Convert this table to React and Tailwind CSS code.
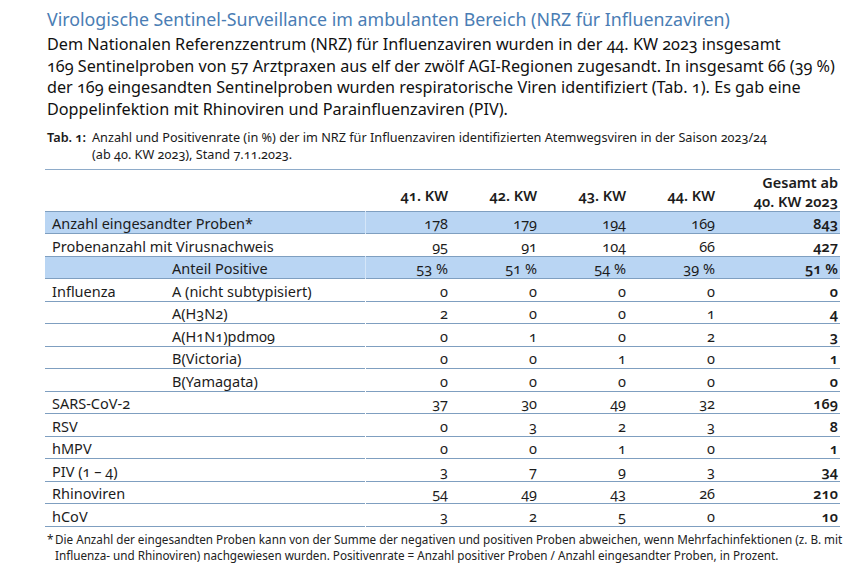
const weeks = ["41. KW", "42. KW", "43. KW", "44. KW"];

const rows = [
  { a: "Anzahl eingesandter Proben*", span: true, v: ["178", "179", "194", "169"], t: "843", blue: true },
  { a: "Probenanzahl mit Virusnachweis", span: true, v: ["95", "91", "104", "66"], t: "427" },
  { a: "", b: "Anteil Positive", v: ["53 %", "51 %", "54 %", "39 %"], t: "51 %", blue: true },
  { a: "Influenza", b: "A (nicht subtypisiert)", v: ["0", "0", "0", "0"], t: "0" },
  { a: "", b: "A(H3N2)", v: ["2", "0", "0", "1"], t: "4" },
  { a: "", b: "A(H1N1)pdm09", v: ["0", "1", "0", "2"], t: "3" },
  { a: "", b: "B(Victoria)", v: ["0", "0", "1", "0"], t: "1" },
  { a: "", b: "B(Yamagata)", v: ["0", "0", "0", "0"], t: "0" },
  { a: "SARS-CoV-2", v: ["37", "30", "49", "32"], t: "169" },
  { a: "RSV", v: ["0", "3", "2", "3"], t: "8" },
  { a: "hMPV", v: ["0", "0", "1", "0"], t: "1" },
  { a: "PIV (1 – 4)", v: ["3", "7", "9", "3"], t: "34" },
  { a: "Rhinoviren", v: ["54", "49", "43", "26"], t: "210" },
  { a: "hCoV", v: ["3", "2", "5", "0"], t: "10" },
];

export default function App() {
  return (
    <div
      className="w-[864px] h-[576px] overflow-hidden bg-white text-[#1c1c1c] pl-[47px] pt-[7px] oldstyle-nums"
      style={{ fontFamily: '"Noto Sans", "Open Sans", sans-serif' }}
    >
      <h1 className="text-[17.8px] leading-[24px] text-[#4a7db4]">
        Virologische Sentinel-Surveillance im ambulanten Bereich (NRZ für Influenzaviren)
      </h1>
      <p className="mt-[3px] text-[16.2px] leading-[21.7px] text-[#111]">
        Dem Nationalen Referenzzentrum (NRZ) für Influenzaviren wurden in der 44. KW 2023 insgesamt
        <br />
        169 Sentinelproben von 57 Arztpraxen aus elf der zwölf AGI-Regionen zugesandt. In insgesamt 66 (39 %)
        <br />
        der 169 eingesandten Sentinelproben wurden respiratorische Viren identifiziert (Tab. 1). Es gab eine
        <br />
        Doppelinfektion mit Rhinoviren und Parainfluenzaviren (PIV).
      </p>
      <div className="mt-[8px] flex text-[12.7px] leading-[17px] text-[#1a1a1a]">
        <span className="font-semibold w-[45px] shrink-0">Tab. 1:</span>
        <span>
          Anzahl und Positivenrate (in %) der im NRZ für Influenzaviren identifizierten Atemwegsviren in der Saison 2023/24
          <br />
          (ab 40. KW 2023), Stand 7.11.2023.
        </span>
      </div>

      <table className="-ml-[2px] mt-[6px] w-[795px] table-fixed border-collapse border-t border-[#8eabc9] text-[14.5px]">
        <colgroup>
          <col className="w-[127px]" />
          <col className="w-[193px]" />
          <col className="w-[89px]" />
          <col className="w-[89px]" />
          <col className="w-[89px]" />
          <col className="w-[89px]" />
          <col className="w-[119px]" />
        </colgroup>
        <thead>
          <tr className="h-[42px] border-b-[1.5px] border-[#7f9fc0]">
            <th />
            <th />
            {weeks.map((w) => (
              <th key={w} className="pr-[6px] pt-[10px] text-right font-semibold leading-[18px]">
                {w}
              </th>
            ))}
            <th className="pr-[2px] pt-[3px] text-right font-semibold leading-[19px]">
              Gesamt ab
              <br />
              40. KW 2023
            </th>
          </tr>
        </thead>
        <tbody>
          {rows.map((r, i) => (
            <tr
              key={i}
              className={`h-[22.5px] border-b-[1.5px] border-[#7f9fc0] leading-[18px] ${r.blue ? "bg-[#b9d5f3]" : ""}`}
            >
              {r.span ? (
                <td colSpan={2} className="pl-[7px] pt-[1px] whitespace-nowrap border-r border-r-white/40">
                  {r.a}
                </td>
              ) : (
                <>
                  <td className="pl-[7px] pt-[1px] whitespace-nowrap">{r.a}</td>
                  <td className="pt-[1px] whitespace-nowrap border-r border-r-white/40">{r.b || ""}</td>
                </>
              )}
              {r.v.map((n, j) => (
                <td key={j} className="pr-[6px] pt-[1px] text-right">
                  {n}
                </td>
              ))}
              <td className="pr-[2px] pt-[1px] text-right font-semibold">{r.t}</td>
            </tr>
          ))}
        </tbody>
      </table>

      <div className="mt-[4px] flex text-[11.7px] leading-[16px] text-[#222]">
        <span className="w-[8px] shrink-0">*</span>
        <span>
          Die Anzahl der eingesandten Proben kann von der Summe der negativen und positiven Proben abweichen, wenn Mehrfachinfektionen (z. B. mit
          <br />
          Influenza- und Rhinoviren) nachgewiesen wurden. Positivenrate = Anzahl positiver Proben / Anzahl eingesandter Proben, in Prozent.
        </span>
      </div>
    </div>
  );
}
